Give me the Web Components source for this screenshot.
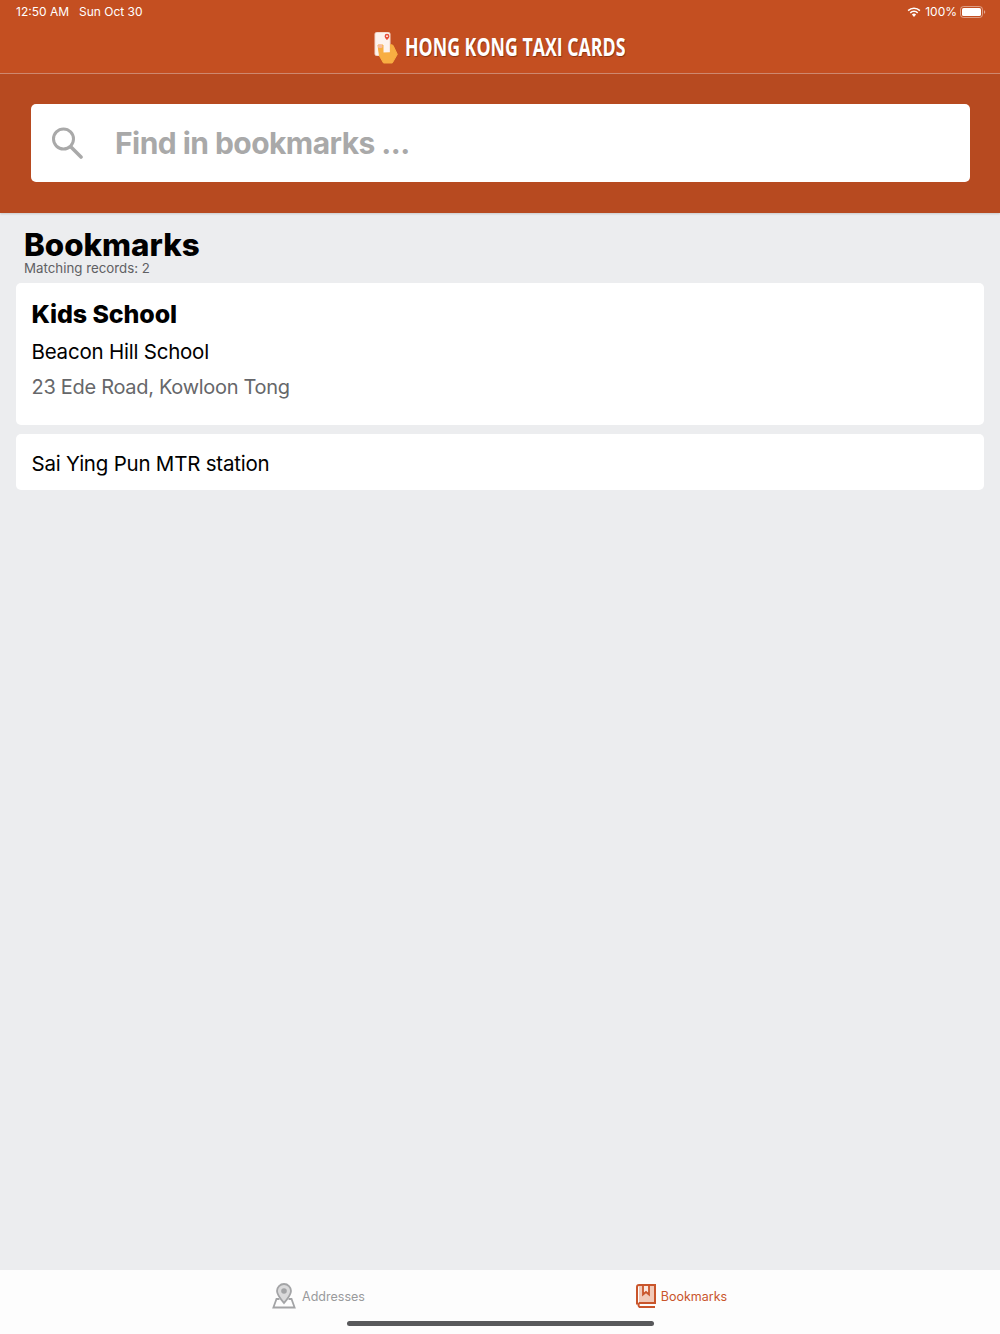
<!DOCTYPE html>
<html>
<head>
<meta charset="utf-8">
<title>Hong Kong Taxi Cards</title>
<style>
    html, body { margin: 0; height: 100%; }
    body { font-family: Inter, "Liberation Sans", sans-serif; background: #ecedef; }
    app-shell { height: 1334px; }
</style>
</head>
<body>
<app-shell>
    <status-bar></status-bar>
    <app-header></app-header>
    <search-box placeholder="Find in bookmarks ..."></search-box>
    <page-heading title="Bookmarks" subtitle="Matching records: 2"></page-heading>
    <bookmark-card>
        <span slot="tag">Kids School</span>
        <span slot="name">Beacon Hill School</span>
        <span slot="address">23 Ede Road, Kowloon Tong</span>
    </bookmark-card>
    <bookmark-card>
        <span slot="name">Sai Ying Pun MTR station</span>
    </bookmark-card>
    <tab-bar></tab-bar>
</app-shell>

<script>
class AppShell extends HTMLElement {
    constructor() {
        super();
        this.attachShadow({ mode: 'open' });
        this.shadowRoot.innerHTML = `
            <style>
                :host {
                    display: flex;
                    flex-direction: column;
                    background: #ecedef;
                }
            </style>
            <slot></slot>
        `;
    }
}

class StatusBar extends HTMLElement {
    constructor() {
        super();
        this.attachShadow({ mode: 'open' });
        this.shadowRoot.innerHTML = `
            <style>
                :host {
                    display: flex;
                    justify-content: space-between;
                    align-items: center;
                    height: 24px;
                    padding: 0 14px 0 16px;
                    background: #c44f21;
                    color: #fff;
                    font: 12px/24px Inter, "Liberation Sans", sans-serif;
                }
                .left { display: flex; gap: 10px; }
                .right { display: flex; align-items: center; gap: 3px; }
                .pct { margin-left: 1px; }
                svg { display: block; }
            </style>
            <div class="left"><span>12:50 AM</span><span>Sun Oct 30</span></div>
            <div class="right">
                <svg width="14" height="10" viewBox="0 0 14 10">
                    <path d="M7 10 4.900 7.600a3 3 0 0 1 4.200 0z" fill="#fff"/>
                    <path d="M3.300 5.900a5.200 5.200 0 0 1 7.400 0" fill="none" stroke="#fff" stroke-width="1.500"/>
                    <path d="M1.100 3.600a8.300 8.300 0 0 1 11.800 0" fill="none" stroke="#fff" stroke-width="1.500"/>
                </svg>
                <span class="pct">100%</span>
                <svg width="26" height="12" viewBox="0 0 26 12">
                    <rect x=".5" y=".5" width="22" height="11" rx="3" fill="none" stroke="#fff" stroke-opacity=".45"/>
                    <rect x="2" y="2" width="19" height="8" rx="1.600" fill="#fff"/>
                    <path d="M24 4.200c.8.200 1.200.9 1.200 1.800s-.4 1.600-1.200 1.800z" fill="#fff" fill-opacity=".5"/>
                </svg>
            </div>
        `;
    }
}

class AppHeader extends HTMLElement {
    constructor() {
        super();
        this.attachShadow({ mode: 'open' });
        this.shadowRoot.innerHTML = `
            <style>
                :host {
                    display: flex;
                    justify-content: center;
                    align-items: center;
                    gap: 7px;
                    height: 48px;
                    padding-bottom: 1px;
                    background: #c44f21;
                    border-bottom: 1px solid #d08a70;
                    color: #fff;
                }
                .title {
                    display: block;
                    width: 221px;
                    margin-bottom: 4px;
                    font: 700 25px/30px "Open Sans", "Liberation Sans", sans-serif;
                    text-shadow: 1px 1px 1px rgba(80, 30, 10, .55);
                    white-space: nowrap;
                    transform: scaleX(.71);
                    transform-origin: left center;
                }
                svg { display: block; }
            </style>
            <svg width="24" height="32" viewBox="0 0 24 32">
                <rect x="1" y=".5" width="15" height="23" rx="1.500" fill="#fdf3ee" stroke="#f3d9cd"/>
                <path d="M13 1.800a2.400 2.400 0 0 0-2.400 2.400c0 1.600 2.400 3.800 2.400 3.800s2.400-2.200 2.400-3.800A2.400 2.400 0 0 0 13 1.800z" fill="#e8503a"/>
                <circle cx="13" cy="4.200" r=".9" fill="#fff"/>
                <path d="M4 13h5v8l7.500-.2v-8.300l2.500.8 4.300 9-5 8.700h-8.800L5.500 24z" fill="#f8ae42" stroke="#f8ae42" stroke-linejoin="round"/>
                <rect x="4" y="12.500" width="4.500" height="3.500" rx="1.500" fill="#f4b9a0"/>
            </svg>
            <span class="title">HONG KONG TAXI CARDS</span>
        `;
    }
}

class SearchBox extends HTMLElement {
    constructor() {
        super();
        this.attachShadow({ mode: 'open' });
        this.shadowRoot.innerHTML = `
            <style>
                :host {
                    display: block;
                    padding: 30px 30px 31px 31px;
                    background: #b74a20;
                    box-shadow: 0 1px 2px rgba(0, 0, 0, .15);
                    position: relative;
                }
                .box {
                    display: flex;
                    align-items: center;
                    gap: 32px;
                    height: 78px;
                    padding-left: 21px;
                    background: #fff;
                    border-radius: 5px;
                }
                .placeholder {
                    color: #a9a9a9;
                    font: 700 30px/1 Inter, "Liberation Sans", sans-serif;
                    letter-spacing: -.55px;
                }
                svg { display: block; }
            </style>
            <div class="box">
                <svg width="31" height="32" viewBox="0 0 31 32" fill="none" stroke="#a9a9a9">
                    <circle cx="11.500" cy="12" r="10" stroke-width="3"/>
                    <path d="M19.500 20.500 29 30" stroke-width="3.600" stroke-linecap="round"/>
                </svg>
                <span class="placeholder"></span>
            </div>
        `;
    }

    connectedCallback() {
        this.shadowRoot.querySelector('.placeholder').textContent = this.getAttribute('placeholder');
    }
}

class PageHeading extends HTMLElement {
    constructor() {
        super();
        this.attachShadow({ mode: 'open' });
        this.shadowRoot.innerHTML = `
            <style>
                :host {
                    display: block;
                    padding: 16px 24px 8px;
                }
                h1 {
                    margin: 0;
                    color: #000;
                    font: 800 31.300px/32px Inter, "Liberation Sans", sans-serif;
                }
                p {
                    margin: 0;
                    color: #5f6063;
                    font: 13.300px/14px Inter, "Liberation Sans", sans-serif;
                }
            </style>
            <h1></h1>
            <p></p>
        `;
    }

    connectedCallback() {
        this.shadowRoot.querySelector('h1').textContent = this.getAttribute('title');
        this.shadowRoot.querySelector('p').textContent = this.getAttribute('subtitle');
    }
}

class BookmarkCard extends HTMLElement {
    constructor() {
        super();
        this.attachShadow({ mode: 'open' });
        this.shadowRoot.innerHTML = `
            <style>
                :host {
                    display: block;
                    margin: 0 16px 9px;
                    padding: 15px 15px 15px 15.500px;
                    background: #fff;
                    border-radius: 5px;
                }
                :host(.plain) { padding: 17px 15px 13px 15.500px; }
                .tag { color: #000; font: 800 25px/32px Inter, "Liberation Sans", sans-serif; letter-spacing: -.1px; margin-bottom: 9px; }
                .name { color: #000; font: 400 20.500px/26px Inter, "Liberation Sans", sans-serif; letter-spacing: -.22px; }
                .address { color: #66676a; font: 400 20px/26px Inter, "Liberation Sans", sans-serif; letter-spacing: -.3px; margin-top: 9px; margin-bottom: 10px; }
                .hidden { display: none; }
            </style>
            <div class="tag"><slot name="tag"></slot></div>
            <div class="name"><slot name="name"></slot></div>
            <div class="address"><slot name="address"></slot></div>
        `;
    }

    connectedCallback() {
        // rows with nothing passed in must not take up space
        if (!this.querySelector('[slot=tag]')) {
            this.shadowRoot.querySelector('.tag').classList.add('hidden');
            this.classList.add('plain');
        }
        if (!this.querySelector('[slot=address]')) this.shadowRoot.querySelector('.address').classList.add('hidden');
    }
}

class TabBar extends HTMLElement {
    constructor() {
        super();
        this.attachShadow({ mode: 'open' });
        this.shadowRoot.innerHTML = `
            <style>
                :host {
                    display: block;
                    margin-top: auto;
                    height: 64px;
                    background: #fdfdfd;
                    position: relative;
                }
                .tabs {
                    display: grid;
                    grid-template-columns: 1fr 1fr;
                    height: 50px;
                    padding: 0 137px;
                }
                .tab {
                    display: flex;
                    justify-content: center;
                    align-items: center;
                    gap: 6px;
                    font: 12.500px/1 Inter, "Liberation Sans", sans-serif;
                    color: #999a9c;
                    padding-top: 1px;
                }
                .tab span { margin-top: 3px; }
                .tab.active { color: #c9552b; gap: 5px; }
                svg { display: block; }
                .home {
                    position: absolute;
                    left: 347px;
                    bottom: 8px;
                    width: 307px;
                    height: 5px;
                    border-radius: 3px;
                    background: #58595b;
                }
            </style>
            <div class="tabs">
                <div class="tab">
                    <svg width="24" height="26" viewBox="0 0 24 26">
                        <path fill="#dadadb" stroke="#a3a4a6" stroke-width="1.800" d="M12 1a7 7 0 0 0-7 7c0 3.800 3.600 8 7 12 3.400-4 7-8.200 7-12a7 7 0 0 0-7-7z"/>
                        <circle cx="12" cy="8" r="2.800" fill="#a3a4a6"/>
                        <path fill="none" stroke="#a3a4a6" stroke-width="1.800" d="M7.500 16H4.500L1.400 24.500h21.200L19.500 16h-3"/>
                    </svg>
                    <span>Addresses</span>
                </div>
                <div class="tab active">
                    <svg width="20" height="24" viewBox="0 0 20 24">
                        <path fill="#f1c9b8" d="M3 1h16v18H3z"/>
                        <path fill="#fbe9e1" d="M7 1h6v9.500L10 8l-3 2.500z"/>
                        <path fill="none" stroke="#c9552b" stroke-width="2" d="M1 20.500V3a2 2 0 0 1 2-2h16v18H3.500a2.500 2.500 0 0 0 0 4H19"/>
                        <path fill="none" stroke="#c9552b" stroke-width="1.800" d="M7 1v9.500l3-2.500 3 2.500V1"/>
                    </svg>
                    <span>Bookmarks</span>
                </div>
            </div>
            <div class="home"></div>
        `;
    }
}

customElements.define('app-shell', AppShell);
customElements.define('status-bar', StatusBar);
customElements.define('app-header', AppHeader);
customElements.define('search-box', SearchBox);
customElements.define('page-heading', PageHeading);
customElements.define('bookmark-card', BookmarkCard);
customElements.define('tab-bar', TabBar);
</script>
</body>
</html>
